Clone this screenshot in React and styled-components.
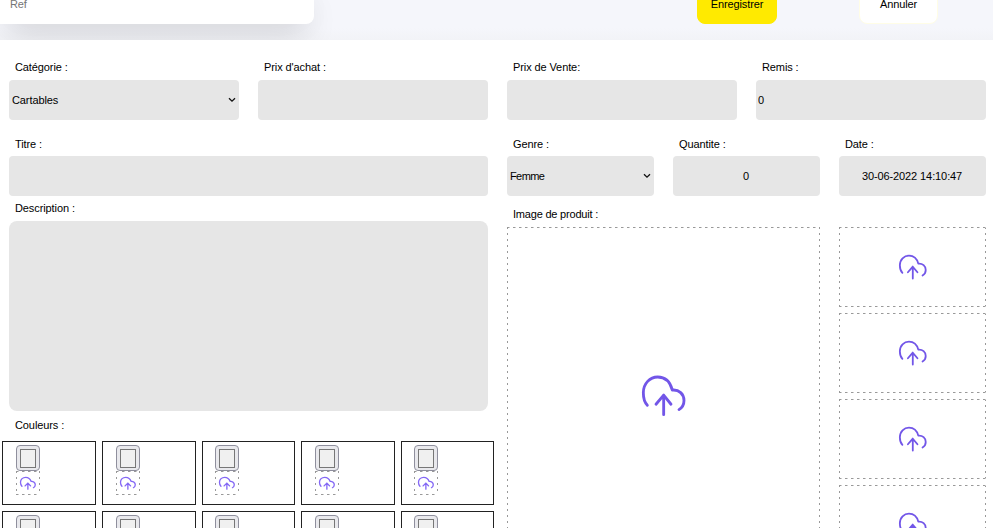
import React from "react";
import styled, { createGlobalStyle, css } from "styled-components";

const GlobalStyle = createGlobalStyle`
  * { box-sizing: border-box; }
  body { margin: 0; background: #fff; overflow: hidden; }
  body, input, select, textarea, button {
    font-family: "Liberation Sans", Arial, sans-serif;
    font-size: 11px;
    letter-spacing: -0.1px;
    color: #000;
  }
`;

const Page = styled.div`
  width: 993px;
  height: 528px;
  overflow: hidden;
  background: #fff;
`;

const Header = styled.header`
  display: flex;
  height: 40px;
  overflow: hidden;
  background: linear-gradient(#f5f6fb 0 28px, #f2f3f7 40px);
`;

const RefInput = styled.input`
  flex: none;
  width: 314px;
  height: 40px;
  margin: -16px 383px 0 0;
  padding: 0 10px;
  border: 0;
  border-radius: 0 0 8px 0;
  background: #fff;
  box-shadow: 0 16px 32px -8px rgba(0, 0, 0, 0.16), 0 8px 30px rgba(0, 0, 0, 0.02);
  &::placeholder { color: #757575; opacity: 1; }
`;

const Button = styled.button`
  flex: none;
  width: ${(p) => (p.$primary ? 80 : 79)}px;
  height: 40px;
  margin: -16px 82px 0 0;
  padding: 0;
  border: 1px solid ${(p) => (p.$primary ? "#ffea00" : "#fffde6")};
  border-radius: 8px;
  background: ${(p) => (p.$primary ? "#ffea00" : "#fff")};
`;

const Form = styled.main`
  display: grid;
  grid-template-columns: 479px 479px;
  column-gap: 19px;
  padding: 20px 7px 0 9px;
`;

const Column = styled.section`
  display: flex;
  flex-direction: column;
`;

const Row = styled.div`
  display: grid;
  grid-template-columns: ${(p) => p.$columns};
  column-gap: 19px;
  margin-top: ${(p) => p.$top || 0}px;
`;

const Field = styled.label`
  display: block;
  min-width: 0;
`;

const Caption = styled.span`
  display: block;
  height: ${(p) => p.$height || 20}px;
  padding-left: 6px;
  line-height: 15px;
  letter-spacing: ${(p) => p.$tracking || "-0.1px"};
  white-space: pre;
`;

const control = css`
  display: block;
  width: 100%;
  border: 0;
  outline: 0;
  background: #e6e6e6;
  border-radius: 4px;
`;

const Input = styled.input`
  ${control}
  height: 40px;
  padding: 0 ${(p) => (p.$center ? 3 : 2)}px 0 2px;
  text-align: ${(p) => (p.$center ? "center" : "left")};
`;

const TextArea = styled.textarea`
  ${control}
  height: 190px;
  border-radius: 8px;
  resize: none;
`;

const SelectBox = styled.span`
  ${control}
  display: flex;
  align-items: center;
  height: 40px;
  padding-right: 3px;
`;

const Select = styled.select`
  flex: 1;
  min-width: 0;
  height: 40px;
  padding: 0 3px;
  border: 0;
  outline: 0;
  appearance: none;
  background: transparent;
  letter-spacing: ${(p) => p.$tracking || "-0.1px"};
`;

const DropZone = styled.div`
  --h: repeating-linear-gradient(90deg, #999 0 2px, #ccc 2px 3px, transparent 3px 6px);
  --v: repeating-linear-gradient(#999 0 2px, transparent 2px 6px);
  display: flex;
  align-items: center;
  justify-content: center;
  width: ${(p) => p.$width}px;
  height: ${(p) => p.$height}px;
  background-image: var(--h), var(--h), var(--v), var(--v);
  background-size: 100% 1px, 100% 1px, 1px 100%, 1px 100%;
  background-position: 0 0, 0 100%, 0 0, 100% 0;
  background-repeat: no-repeat;
`;

const Cloud = styled.svg`
  display: block;
  fill: none;
  stroke: ${(p) => p.$stroke || "#7256e8"};
  stroke-width: ${(p) => p.$weight || 8.5};
  stroke-linecap: round;
  stroke-linejoin: round;
  overflow: visible;
`;

const Gallery = styled.div`
  display: grid;
  grid-template-columns: 313px 147px;
  column-gap: 19px;
`;

const Thumbs = styled.div`
  display: flex;
  flex-direction: column;
  gap: 6px;
`;

const Colors = styled.div`
  display: grid;
  grid-template-columns: 94px 94px 93px 94px 93px;
  gap: 6px;
  width: 492px;
  margin-left: -7px;
`;

const ColorCell = styled.div`
  height: 64px;
  padding: 3px 0 0 13px;
  border: 1px solid #222;
  &:nth-child(5n + 3), &:nth-child(5n) { padding-left: 12px; }
`;

const Swatch = styled.div`
  width: 24px;
  height: 26px;
  padding: 3px;
  border: 1px solid #8f8f9d;
  border-radius: 4px;
  background: #e9e9ed;
  &::before {
    content: "";
    display: block;
    height: 17px;
    border: 1px solid #777;
    background: #f0f0f0;
  }
`;

function CloudUpload({ width, height, ...rest }) {
  return (
    <Cloud width={width} height={height} viewBox="66 48 132 122" preserveAspectRatio="none" {...rest}>
      <path d="M82 135C73 126 70 113 70 98C70 70 90 51 113 51C136 51 151 67 157 90C177 88 192 102 192 121C192 133 187 142 177 148" />
      <path d="M131 163V105M108 132L131 105L153 132" />
    </Cloud>
  );
}

function SelectField({ label, value, captionHeight, tracking }) {
  return (
    <Field>
      <Caption $height={captionHeight}>{label}</Caption>
      <SelectBox>
        <Select defaultValue={value} $tracking={tracking}>
          <option>{value}</option>
        </Select>
        <svg width="8" height="6" viewBox="0 0 8 6" fill="none" stroke="#111" strokeWidth="1.3">
          <path d="M1 1.2L4 4.2L7 1.2" />
        </svg>
      </SelectBox>
    </Field>
  );
}

function TextField({ label, value = "", center, captionHeight }) {
  return (
    <Field>
      <Caption $height={captionHeight}>{label}</Caption>
      <Input defaultValue={value} $center={center} />
    </Field>
  );
}

export default function App() {
  return (
    <Page>
      <GlobalStyle />
      <Header>
        <RefInput placeholder="Ref" />
        <Button $primary>Enregistrer</Button>
        <Button>Annuler</Button>
      </Header>
      <Form>
        <Column>
          <Row $columns="1fr 1fr">
            <SelectField label="Catégorie :" value="Cartables" />
            <TextField label="Prix d'achat :" />
          </Row>
          <Row $columns="1fr" $top={17}>
            <TextField label="Titre :" captionHeight={19} />
          </Row>
          <Row $columns="1fr" $top={5}>
            <Field>
              <Caption>Description :</Caption>
              <TextArea />
            </Field>
          </Row>
          <Row $columns="1fr" $top={7}>
            <Caption $height={23}>Couleurs :</Caption>
          </Row>
          <Colors>
            {Array.from({ length: 10 }, (_, i) => (
              <ColorCell key={i}>
                <Swatch />
                <DropZone $width={24} $height={24}>
                  <CloudUpload width={16} height={13} $stroke="#8468f5" $weight={11} />
                </DropZone>
              </ColorCell>
            ))}
          </Colors>
        </Column>
        <Column>
          <Row $columns="1fr 1fr">
            <TextField label="Prix de Vente:" />
            <TextField label="Remis :" value="0" />
          </Row>
          <Row $columns="1fr 1fr 1fr" $top={17}>
            <SelectField label="Genre :" value="Femme" captionHeight={19} tracking="-0.6px" />
            <TextField label="Quantite :" value="0" center captionHeight={19} />
            <TextField label="Date :" value="30-06-2022 14:10:47" center captionHeight={19} />
          </Row>
          <Row $columns="1fr" $top={11}>
            <Caption $tracking="-0.2px">Image de produit :</Caption>
          </Row>
          <Gallery>
            <DropZone $width={313} $height={338}>
              <CloudUpload width={44} height={41} />
            </DropZone>
            <Thumbs>
              {[0, 1, 2, 3].map((i) => (
                <DropZone key={i} $width={147} $height={80}>
                  <CloudUpload width={28} height={25} />
                </DropZone>
              ))}
            </Thumbs>
          </Gallery>
        </Column>
      </Form>
    </Page>
  );
}
